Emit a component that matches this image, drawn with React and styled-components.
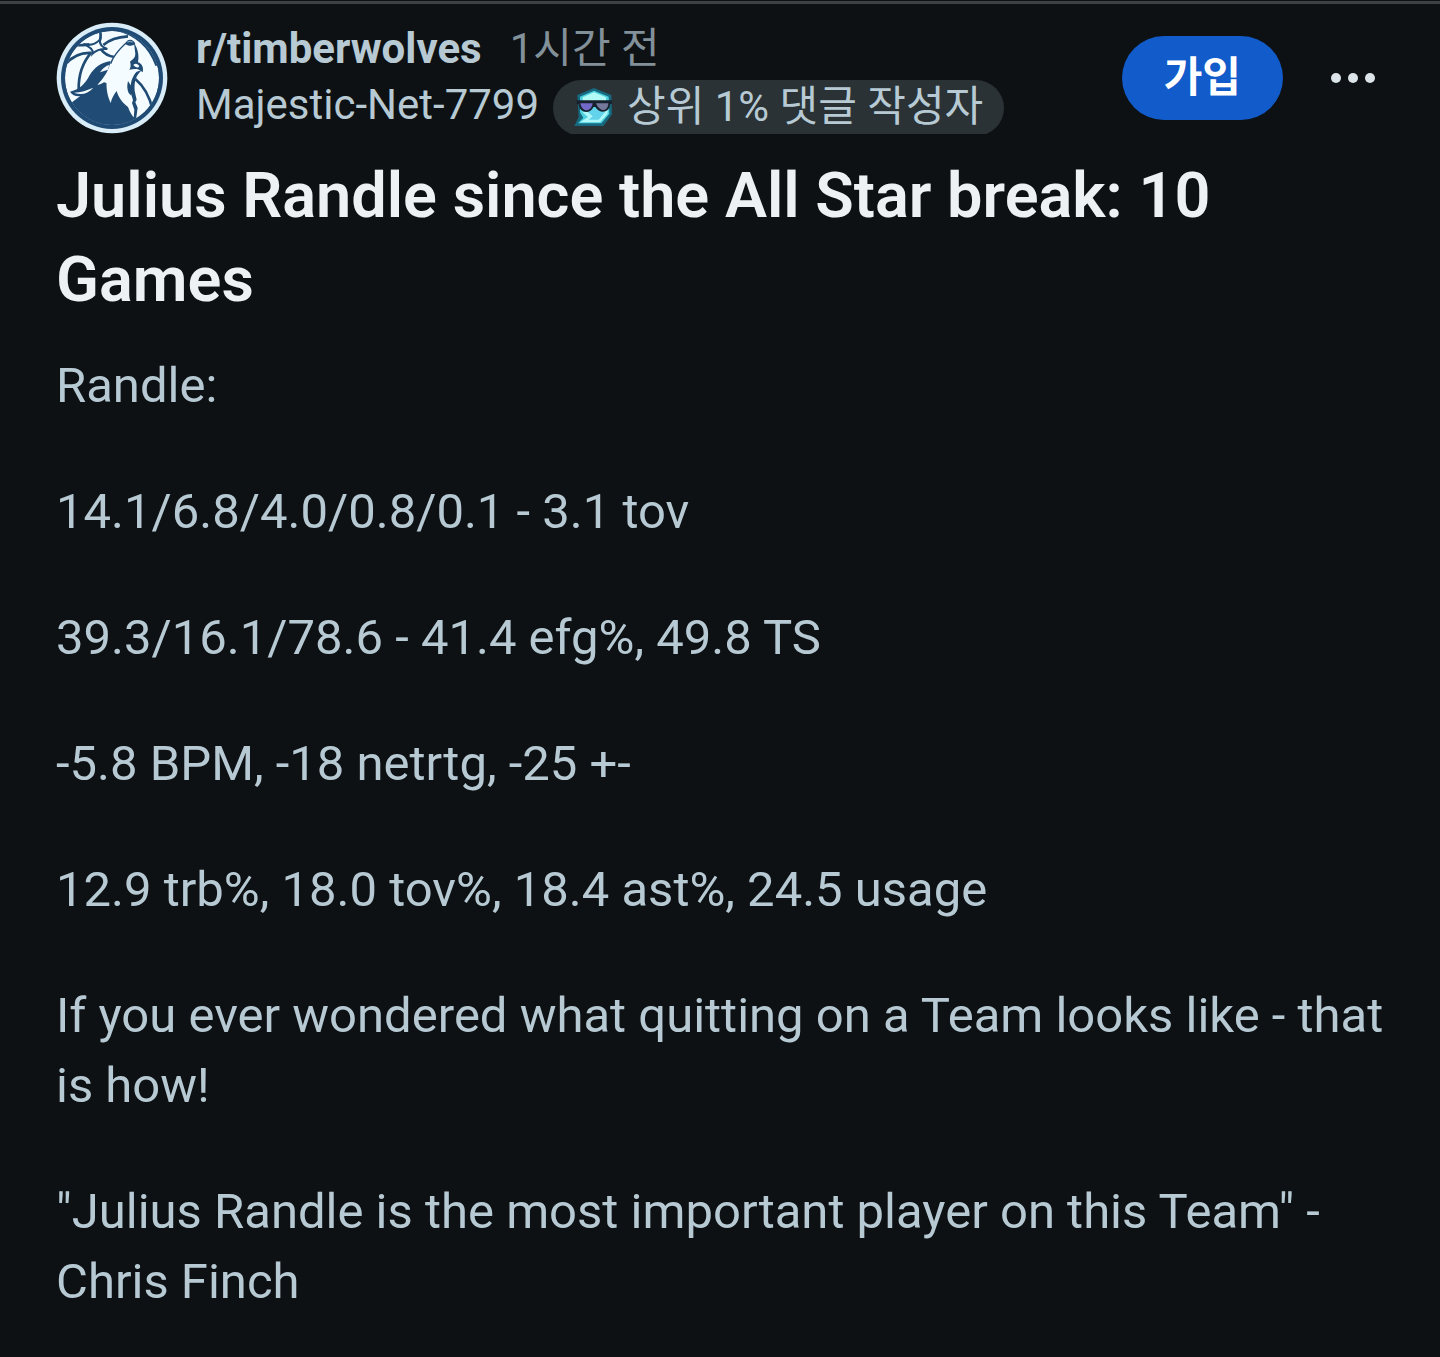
import React from 'react';
import styled, { createGlobalStyle } from 'styled-components';

const GlobalStyle = createGlobalStyle`
  * {
    box-sizing: border-box;
  }

  body {
    margin: 0;
    background: #0e1113;
    color: #b7cad4;
    font-family: Roboto, 'Noto Sans CJK KR', sans-serif;
  }

  h1, p {
    margin: 0;
  }
`;

const Post = styled.article`
  min-height: 100vh;
  padding-top: 1px;
  background: #0e1113;
`;

const Divider = styled.div`
  height: 3px;
  background: #3e4144;
`;

const PostHeader = styled.header`
  display: flex;
  align-items: flex-start;
  padding: 18px 59px 0 56px;
`;

const Avatar = styled.svg`
  flex: none;
  width: 112px;
  height: 112px;
  margin-right: 28px;
`;

const Meta = styled.div`
  flex: 1;
  min-width: 0;
  display: flex;
  flex-direction: column;
  gap: 4px;
`;

const MetaRow = styled.div`
  display: flex;
  align-items: ${props => (props.$tight ? 'flex-start' : 'center')};
  gap: ${props => (props.$tight ? '14px' : '28px')};
  height: 54px;
  overflow: hidden;
  font-size: 42px;
  line-height: ${props => (props.$tight ? '50px' : '54px')};
  white-space: nowrap;
`;

const Community = styled.a`
  color: #b7cad4;
  font-weight: 700;
  text-decoration: none;
`;

const Author = styled.a`
  color: #b7cad4;
  text-decoration: none;
`;

const Time = styled.time`
  color: #82909a;
`;

const Flair = styled.span`
  display: inline-flex;
  align-items: center;
  gap: 13px;
  height: 56px;
  padding: 0 21px 2px;
  border-radius: 28px;
  background: #2a3236;
`;

const FlairIcon = styled.svg`
  flex: none;
  width: 40px;
  height: 40px;
`;

const Actions = styled.div`
  display: flex;
  align-items: center;
  gap: 42px;
  padding-top: 14px;
`;

const JoinButton = styled.button`
  height: 84px;
  padding: 0 42px;
  border: 0;
  border-radius: 42px;
  background: #115bca;
  color: #fff;
  font: inherit;
  font-size: 42px;
  font-weight: 700;
  line-height: 52px;
  cursor: pointer;
`;

const MoreButton = styled.button`
  display: flex;
  padding: 0;
  border: 0;
  background: none;
  color: #dbe4e9;
  cursor: pointer;
`;

const Title = styled.h1`
  padding: 20px 56px 0;
  color: #eef1f3;
  font-size: 63px;
  font-weight: 600;
  line-height: 84px;
`;

const Body = styled.div`
  display: flex;
  flex-direction: column;
  gap: 56px;
  padding: 29px 56px 38px;
  font-size: 49px;
  line-height: 70px;
`;

const paragraphs = [
  'Randle:',
  '14.1/6.8/4.0/0.8/0.1 - 3.1 tov',
  '39.3/16.1/78.6 - 41.4 efg%, 49.8 TS',
  '-5.8 BPM, -18 netrtg, -25 +-',
  '12.9 trb%, 18.0 tov%, 18.4 ast%, 24.5 usage',
  'If you ever wondered what quitting on a Team looks like - that is how!',
  '"Julius Randle is the most important player on this Team" - Chris Finch',
];

function WolfLogo() {
  return (
    <Avatar viewBox="30 29 336 336" role="img" aria-label="r/timberwolves">
      <defs>
        <clipPath id="ball">
          <circle cx="198" cy="197" r="141" />
        </clipPath>
      </defs>
      <circle cx="198" cy="197" r="166" fill="#d9edf8" />
      <circle cx="198" cy="197" r="153" fill="#1f4b75" />
      <g clipPath="url(#ball)">
        <circle cx="198" cy="197" r="141" fill="#f4fcff" />
        {/* ball seams */}
        <g fill="none" stroke="#1f4b75" strokeWidth="8">
          <path d="M54 160 C76 134 106 120 136 122" />
          <path d="M80 98 C100 100 116 98 130 96" />
          <path d="M160 50 C165 62 165 76 160 90" />
          <path d="M172 98 C190 82 214 74 246 72" />
          <path d="M136 120 C110 150 97 184 98 232" />
          <path d="M164 110 C174 124 188 132 206 134" />
          <path d="M204 50 C262 62 310 98 332 160" />
          <path d="M268 200 C292 220 310 250 320 292" />
        </g>
        {/* star where the seams meet */}
        <path d="M112 95 Q140 104 162 82 Q158 100 184 110 Q156 108 140 124 Q144 108 112 95 Z" fill="#f4fcff" stroke="#1f4b75" strokeWidth="6" />
        {/* mountain */}
        <path d="M70 276 L104 250 L142 222 L160 204 L250 240 L268 316 L240 360 L100 360 Z" fill="#1f4b75" />
        {/* fur behind the head */}
        <path d="M194 146 C166 150 144 166 130 190 C118 212 104 230 72 238 C80 252 96 254 112 250 L150 240 L184 190 Z" fill="#1f4b75" />
        <path d="M84 241 C104 240 124 234 142 226 C126 244 106 250 84 241 Z" fill="#f4fcff" />
        <path d="M190 158 C180 160 170 168 162 180 L186 172 Z" fill="#f4fcff" />
        {/* howling wolf */}
        <path d="M240 90 C222 108 204 126 194 152 C186 178 174 196 154 218 C166 216 176 210 182 204 C180 230 184 250 194 272 C198 256 204 246 212 236 C218 256 228 270 246 284 C252 300 258 310 266 318 L270 290 L262 240 L266 202 L288 178 L282 156 L268 154 L274 132 L266 92 Z" fill="#f4fcff" />
        <path d="M240 92 C216 114 202 130 194 154" fill="none" stroke="#1f4b75" strokeWidth="4" />
        {/* nose, muzzle and jaw */}
        <path d="M238 94 C242 78 264 78 268 96 C258 102 246 102 238 94 Z" fill="#1f4b75" />
        <path d="M244 90 Q252 84 260 90" fill="none" stroke="#7e9fba" strokeWidth="4" />
        <path d="M264 92 C276 110 280 130 276 150 C288 154 294 166 290 180 L282 174 C274 168 262 170 250 172 C256 162 254 154 252 148 C258 142 268 138 268 124 Z" fill="#1f4b75" />
        <path d="M262 158 C268 152 276 154 280 162 C276 168 268 166 262 158 Z" fill="#f4fcff" />
        {/* chest edge */}
        <path d="M290 172 C270 186 264 206 266 236 L272 262 L268 270 L275 286 L270 322 L263 320 L265 292 L258 272 L261 264 L254 240 C252 212 258 192 272 178 Z" fill="#1f4b75" />
        <path d="M246 206 C242 222 244 232 248 242 L256 250 L256 222 Z" fill="#1f4b75" />
      </g>
    </Avatar>
  );
}

function CoolIcon() {
  return (
    <FlairIcon viewBox="0 0 120 120" aria-hidden="true">
      <path d="M60 3 L112 24 L114 82 L88 117 H1 L14 90 L10 24 Z" fill="#17697f" />
      <path d="M60 11 L104 29 L106 80 L82 109 H12 L28 92 L18 76 V29 Z" fill="#4ed2df" />
      <path d="M60 16 L96 31 V44 H26 V31 Z" fill="#b2faf6" />
      <path d="M24 74 L102 70 L100 82 L78 106 H18 L42 90 Z" fill="#aef8fa" />
      <path d="M40 74 L60 62 L94 74 L74 98 H44 L56 88 Z" fill="#62d3ea" />
      <path d="M8 40 H114 V50 L108 52 C108 78 76 82 64 60 H58 C50 82 16 80 14 52 L8 50 Z" fill="#17222e" />
      <path d="M19 49 H56 C52 76 24 78 19 49 Z" fill="#7269c9" />
      <path d="M66 49 H103 C102 76 76 76 66 49 Z" fill="#74799b" />
    </FlairIcon>
  );
}

function App() {
  return (
    <>
      <GlobalStyle />
      <Post>
        <Divider />
        <PostHeader>
          <WolfLogo />
          <Meta>
            <MetaRow>
              <Community href="#community">r/timberwolves</Community>
              <Time>1시간 전</Time>
            </MetaRow>
            <MetaRow $tight>
              <Author href="#author">Majestic-Net-7799</Author>
              <Flair>
                <CoolIcon />
                상위 1% 댓글 작성자
              </Flair>
            </MetaRow>
          </Meta>
          <Actions>
            <JoinButton type="button">가입</JoinButton>
            <MoreButton type="button" aria-label="더보기">
              <svg width="56" height="56" viewBox="0 0 56 56" fill="currentColor">
                <circle cx="11" cy="28" r="5" />
                <circle cx="28" cy="28" r="5" />
                <circle cx="45" cy="28" r="5" />
              </svg>
            </MoreButton>
          </Actions>
        </PostHeader>
        <Title>Julius Randle since the All Star break: 10 Games</Title>
        <Body>
          {paragraphs.map(text => (
            <p key={text}>{text}</p>
          ))}
        </Body>
      </Post>
    </>
  );
}

export default App;
